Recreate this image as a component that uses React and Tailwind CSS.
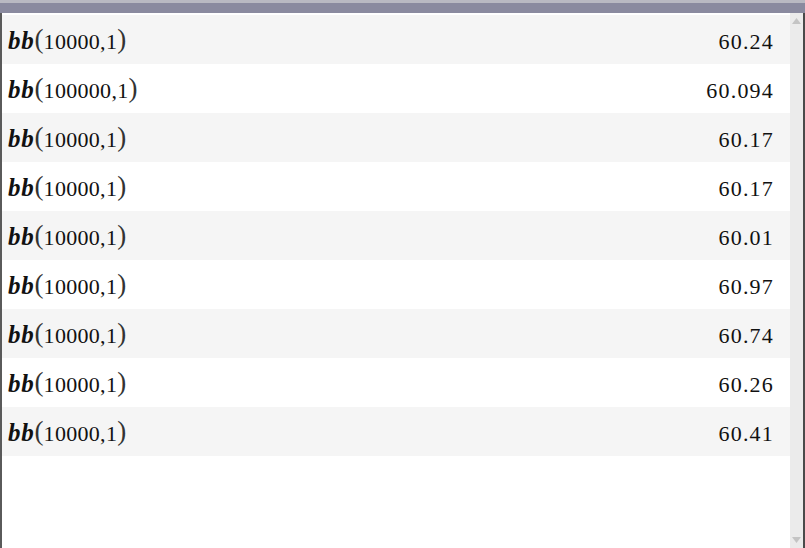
const rows = [
  { arg: '10000,1', val: '60.24' },
  { arg: '100000,1', val: '60.094' },
  { arg: '10000,1', val: '60.17' },
  { arg: '10000,1', val: '60.17' },
  { arg: '10000,1', val: '60.01' },
  { arg: '10000,1', val: '60.97' },
  { arg: '10000,1', val: '60.74' },
  { arg: '10000,1', val: '60.26' },
  { arg: '10000,1', val: '60.41' },
];

export default function App() {
  return (
    <div className="w-[805px] h-[548px] flex flex-col bg-white overflow-hidden" style={{ fontFamily: '"Liberation Serif", serif' }}>
      {/* title strip */}
      <div className="h-[3px] bg-[#b9b9c2]" />
      <div className="h-[10px] bg-[#8a8a9f]" />

      <div className="flex-1 flex min-h-0">
        <div className="w-[2px] bg-[#5a5a5a]" />

        <div className="flex-1 pt-[2px]">
          {rows.map((r, i) => (
            <div
              key={i}
              className={`h-[49px] flex items-center justify-between pl-[6px] pr-[16px] pt-[3px] ${i % 2 === 0 ? 'bg-[#f5f5f5]' : 'bg-white'}`}
            >
              <span className="flex items-center text-[22px] text-[#111]">
                <span className="italic font-bold text-[25px] leading-none tracking-[0.8px] -mt-[1px]">bb</span>
                <span className="text-[27px] leading-none -mt-[3px] font-light text-[#333]">(</span>
                <span className="tracking-[0.3px]">{r.arg}</span>
                <span className="text-[27px] leading-none -mt-[3px] font-light text-[#333]">)</span>
              </span>
              <span className="text-[22px] text-[#111] tracking-[1.2px]">{r.val}</span>
            </div>
          ))}
        </div>

        {/* scrollbar */}
        <div className="w-[13px] bg-[#ebebeb] flex flex-col justify-between items-center py-[5px]">
          <svg width="9" height="6" viewBox="0 0 9 6"><path d="M4.5 0L9 6H0Z" fill="#c4c4c4" /></svg>
          <svg width="9" height="6" viewBox="0 0 9 6"><path d="M0 0H9L4.5 6Z" fill="#c4c4c4" /></svg>
        </div>
        <div className="w-[2px] bg-[#4a4a4a]" />
      </div>
    </div>
  );
}
